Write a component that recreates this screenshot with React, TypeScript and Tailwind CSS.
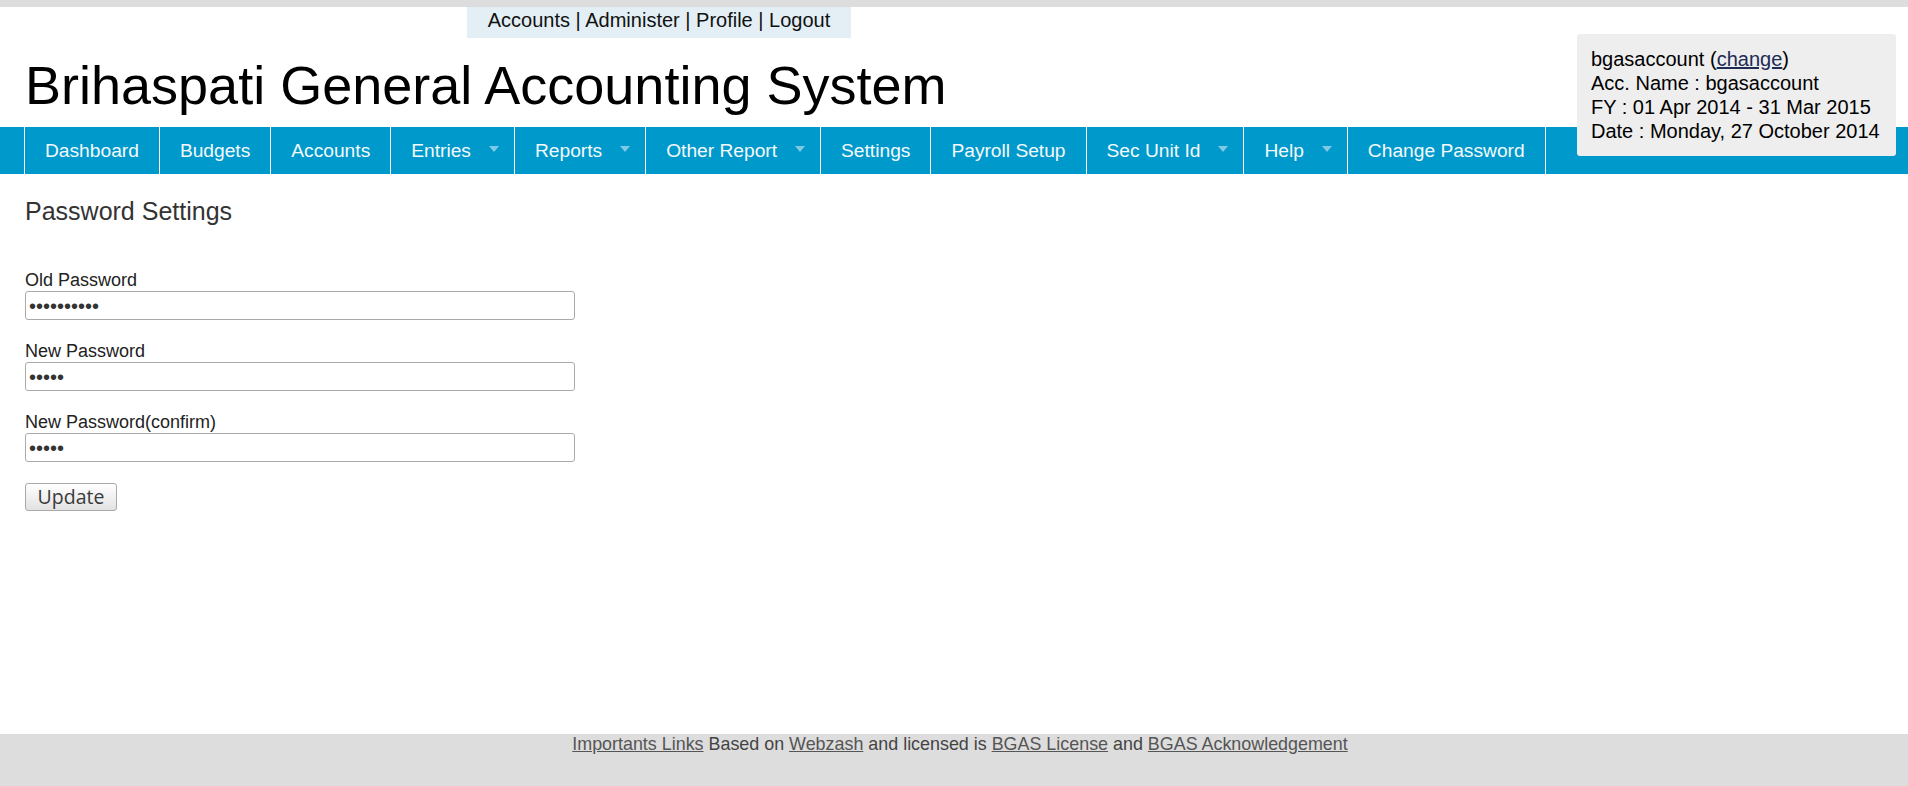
import React from 'react';

const navItems: { label: string; dropdown?: boolean }[] = [
  { label: 'Dashboard' },
  { label: 'Budgets' },
  { label: 'Accounts' },
  { label: 'Entries', dropdown: true },
  { label: 'Reports', dropdown: true },
  { label: 'Other Report', dropdown: true },
  { label: 'Settings' },
  { label: 'Payroll Setup' },
  { label: 'Sec Unit Id', dropdown: true },
  { label: 'Help', dropdown: true },
  { label: 'Change Password' },
];

const fields = [
  { label: 'Old Password', value: 'oldpasswrd' },
  { label: 'New Password', value: 'newpw' },
  { label: 'New Password(confirm)', value: 'newpw' },
];

export default function App() {
  return (
    <div className="min-h-screen flex flex-col bg-white font-['Liberation_Sans',Arial,sans-serif] text-black">
      {/* top strip */}
      <div className="h-[7px] bg-[#dddddd]" />

      {/* header */}
      <div className="relative">
        <div className="ml-[467px] w-[384px] h-[31px] bg-[#e3eff5] text-[20px] leading-[23px] pt-[2px] text-center text-[#111]">
          <a href="#">Accounts</a> | <a href="#">Administer</a> | <a href="#">Profile</a> | <a href="#">Logout</a>
        </div>
        <h1 className="mt-[20px] pl-[25px] text-[54px] leading-[54px] font-normal">
          Brihaspati General Accounting System
        </h1>

        <nav className="mt-[15px] h-[47px] bg-[#0099cc] flex">
          <ul className="ml-[24px] flex border-l border-white h-full">
            {navItems.map((item) => (
              <li
                key={item.label}
                className={`flex items-center h-full pt-[2px] border-r border-white text-[19.2px] text-[#f4f9fb] whitespace-nowrap ${
                  item.dropdown ? 'pl-[20px] pr-[15px]' : 'px-[20px]'
                }`}
              >
                <span>{item.label}</span>
                {item.dropdown && (
                  <span className="ml-[18px] mb-[5px] w-0 h-0 border-l-[5px] border-r-[5px] border-t-[6px] border-l-transparent border-r-transparent border-t-[#80c9e6]" />
                )}
              </li>
            ))}
          </ul>
        </nav>

        {/* account info box */}
        <div className="absolute right-[12px] top-[27px] w-[319px] px-[14px] py-[13px] bg-[#eeeeee] rounded-[3px] text-[20px] leading-[24px] text-black whitespace-nowrap">
          <div>
            bgasaccount (<a href="#" className="underline text-[#1d2b55]">change</a>)
          </div>
          <div>Acc. Name : bgasaccount</div>
          <div>FY : 01 Apr 2014 - 31 Mar 2015</div>
          <div>Date : Monday, 27 October 2014</div>
        </div>
      </div>

      {/* content */}
      <main className="flex-1 pl-[25px]">
        <h2 className="mt-[23px] text-[25px] leading-[29px] font-normal text-[#333]">Password Settings</h2>

        <form className="mt-[44px]" onSubmit={(e) => e.preventDefault()}>
          {fields.map((f) => (
            <div key={f.label} className="mb-[21px]">
              <label className="block text-[18px] leading-[21px] text-[#222]">{f.label}</label>
              <input
                type="password"
                value={f.value}
                readOnly
                className="block w-[550px] h-[29px] px-[3px] border border-[#aaaaaa] rounded-[3px] text-[20px] text-[#333] bg-white outline-none"
              />
            </div>
          ))}
          <button
            type="submit"
            className="w-[92px] h-[28px] border border-[#a9a9a9] rounded-[3px] bg-gradient-to-b from-[#ffffff] to-[#e2e2e2] font-['Open_Sans',sans-serif] text-[19.5px] leading-[24px] text-[#3a3a3a]"
          >
            Update
          </button>
        </form>
      </main>

      {/* footer */}
      <footer className="h-[52px] pl-[12px] bg-[#dddddd] text-center text-[17.9px] leading-[20px] text-[#444]">
        <a href="#" className="underline text-[#555]">Importants Links</a> Based on{' '}
        <a href="#" className="underline text-[#555]">Webzash</a> and licensed is{' '}
        <a href="#" className="underline text-[#555]">BGAS License</a> and{' '}
        <a href="#" className="underline text-[#555]">BGAS Acknowledgement</a>
      </footer>
    </div>
  );
}
